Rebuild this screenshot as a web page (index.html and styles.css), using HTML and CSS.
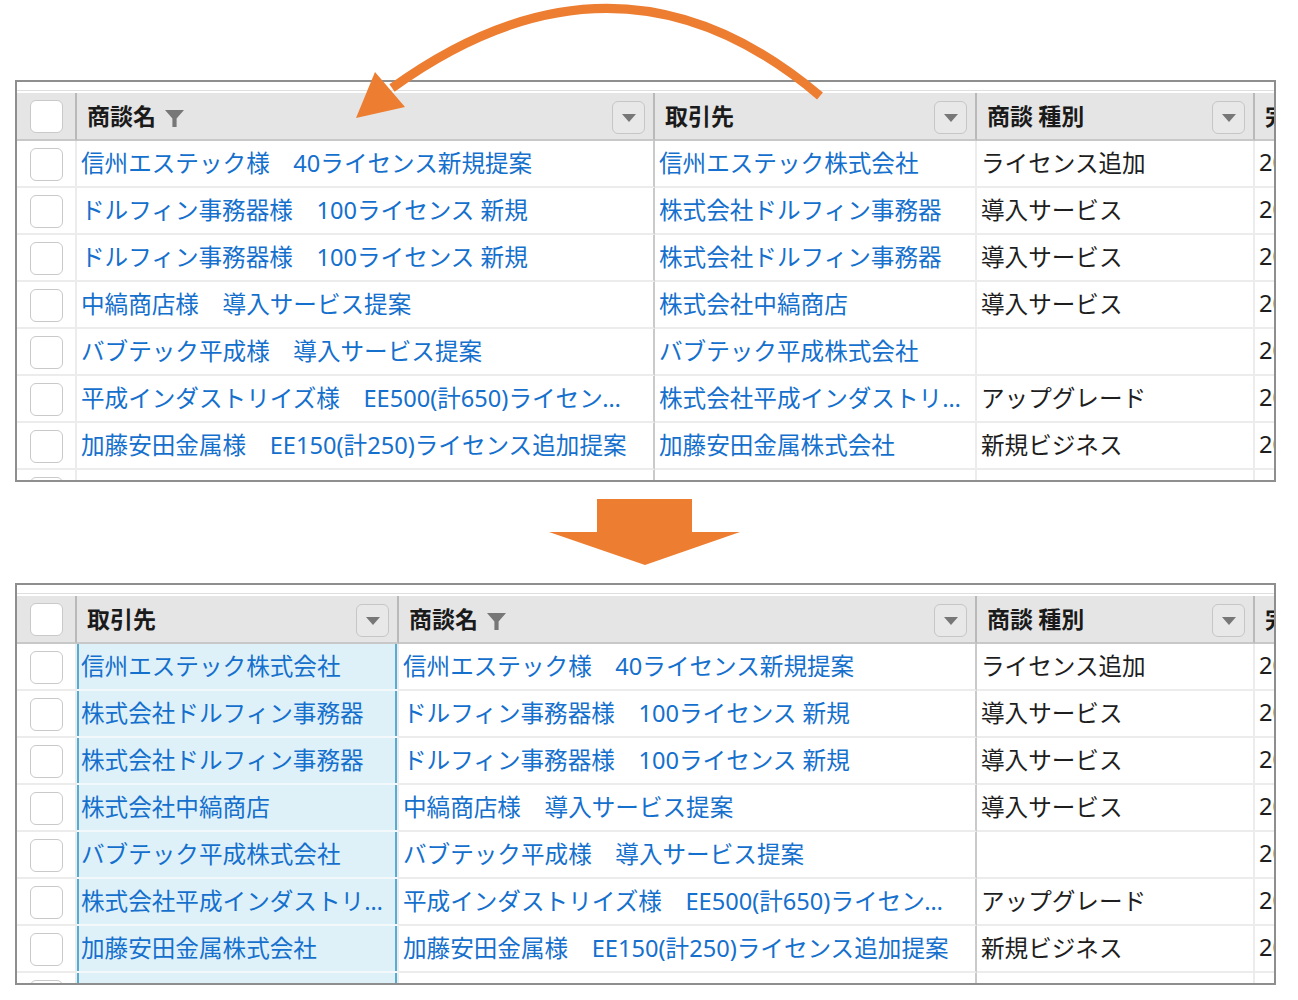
FILE: index.html
```html
<!DOCTYPE html>
<html lang="ja">
<head>
<meta charset="utf-8">
<title>列の並べ替え</title>
<link rel="stylesheet" href="styles.css">
</head>
<body>
<div class="page">
  <div class="grid">
    <div class="strip"></div>
    <div class="row head">
      <div class="cell w-chk"><span class="chk"></span></div>
      <div class="cell w-name"><span class="htxt">商談名</span><svg class="funnel" width="19" height="17" viewBox="0 0 19 17"><path d="M0 0H19L11.6 8.6V17H7.4V8.6Z" fill="#777"/></svg><span class="dd"></span></div>
      <div class="cell w-acct"><span class="htxt">取引先</span><span class="dd"></span></div>
      <div class="cell w-type"><span class="htxt">商談 種別</span><span class="dd"></span></div>
      <div class="cell w-date"><span class="htxt">完了予定日</span></div>
    </div>
    <div class="row data">
      <div class="cell w-chk"><span class="chk"></span></div>
      <div class="cell w-name"><span class="txt link">信州エステック様　40ライセンス新規提案</span></div>
      <div class="cell w-acct"><span class="txt link">信州エステック株式会社</span></div>
      <div class="cell w-type"><span class="txt">ライセンス追加</span></div>
      <div class="cell w-date"><span class="txt">2019/03/31</span></div>
    </div>
    <div class="row data">
      <div class="cell w-chk"><span class="chk"></span></div>
      <div class="cell w-name"><span class="txt link">ドルフィン事務器様　100ライセンス 新規</span></div>
      <div class="cell w-acct"><span class="txt link">株式会社ドルフィン事務器</span></div>
      <div class="cell w-type"><span class="txt">導入サービス</span></div>
      <div class="cell w-date"><span class="txt">2019/04/15</span></div>
    </div>
    <div class="row data">
      <div class="cell w-chk"><span class="chk"></span></div>
      <div class="cell w-name"><span class="txt link">ドルフィン事務器様　100ライセンス 新規</span></div>
      <div class="cell w-acct"><span class="txt link">株式会社ドルフィン事務器</span></div>
      <div class="cell w-type"><span class="txt">導入サービス</span></div>
      <div class="cell w-date"><span class="txt">2019/04/30</span></div>
    </div>
    <div class="row data">
      <div class="cell w-chk"><span class="chk"></span></div>
      <div class="cell w-name"><span class="txt link">中縞商店様　導入サービス提案</span></div>
      <div class="cell w-acct"><span class="txt link">株式会社中縞商店</span></div>
      <div class="cell w-type"><span class="txt">導入サービス</span></div>
      <div class="cell w-date"><span class="txt">2019/05/10</span></div>
    </div>
    <div class="row data">
      <div class="cell w-chk"><span class="chk"></span></div>
      <div class="cell w-name"><span class="txt link">バブテック平成様　導入サービス提案</span></div>
      <div class="cell w-acct"><span class="txt link">バブテック平成株式会社</span></div>
      <div class="cell w-type"><span class="txt"></span></div>
      <div class="cell w-date"><span class="txt">2019/05/20</span></div>
    </div>
    <div class="row data">
      <div class="cell w-chk"><span class="chk"></span></div>
      <div class="cell w-name"><span class="txt link">平成インダストリイズ様　EE500(計650)ライセンス追加提案</span></div>
      <div class="cell w-acct"><span class="txt link">株式会社平成インダストリイズ</span></div>
      <div class="cell w-type"><span class="txt">アップグレード</span></div>
      <div class="cell w-date"><span class="txt">2019/06/01</span></div>
    </div>
    <div class="row data">
      <div class="cell w-chk"><span class="chk"></span></div>
      <div class="cell w-name"><span class="txt link">加藤安田金属様　EE150(計250)ライセンス追加提案</span></div>
      <div class="cell w-acct"><span class="txt link">加藤安田金属株式会社</span></div>
      <div class="cell w-type"><span class="txt">新規ビジネス</span></div>
      <div class="cell w-date"><span class="txt">2019/06/15</span></div>
    </div>
    <div class="row data">
      <div class="cell w-chk"><span class="chk"></span></div>
      <div class="cell w-name"></div>
      <div class="cell w-acct"></div>
      <div class="cell w-type"></div>
      <div class="cell w-date"></div>
    </div>
  </div>

  <div class="between">
    <svg class="down" width="191" height="66" viewBox="0 0 191 66"><path d="M48 0H143V33H191L96 66L0 33H48Z" fill="#ed7d31"/></svg>
  </div>

  <div class="grid">
    <div class="strip"></div>
    <div class="row head">
      <div class="cell w-chk"><span class="chk"></span></div>
      <div class="cell w-acct"><span class="htxt">取引先</span><span class="dd"></span></div>
      <div class="cell w-name"><span class="htxt">商談名</span><svg class="funnel" width="19" height="17" viewBox="0 0 19 17"><path d="M0 0H19L11.6 8.6V17H7.4V8.6Z" fill="#777"/></svg><span class="dd"></span></div>
      <div class="cell w-type"><span class="htxt">商談 種別</span><span class="dd"></span></div>
      <div class="cell w-date"><span class="htxt">完了予定日</span></div>
    </div>
    <div class="row data">
      <div class="cell w-chk"><span class="chk"></span></div>
      <div class="cell w-acct sel"><span class="txt link">信州エステック株式会社</span></div>
      <div class="cell w-name"><span class="txt link">信州エステック様　40ライセンス新規提案</span></div>
      <div class="cell w-type"><span class="txt">ライセンス追加</span></div>
      <div class="cell w-date"><span class="txt">2019/03/31</span></div>
    </div>
    <div class="row data">
      <div class="cell w-chk"><span class="chk"></span></div>
      <div class="cell w-acct sel"><span class="txt link">株式会社ドルフィン事務器</span></div>
      <div class="cell w-name"><span class="txt link">ドルフィン事務器様　100ライセンス 新規</span></div>
      <div class="cell w-type"><span class="txt">導入サービス</span></div>
      <div class="cell w-date"><span class="txt">2019/04/15</span></div>
    </div>
    <div class="row data">
      <div class="cell w-chk"><span class="chk"></span></div>
      <div class="cell w-acct sel"><span class="txt link">株式会社ドルフィン事務器</span></div>
      <div class="cell w-name"><span class="txt link">ドルフィン事務器様　100ライセンス 新規</span></div>
      <div class="cell w-type"><span class="txt">導入サービス</span></div>
      <div class="cell w-date"><span class="txt">2019/04/30</span></div>
    </div>
    <div class="row data">
      <div class="cell w-chk"><span class="chk"></span></div>
      <div class="cell w-acct sel"><span class="txt link">株式会社中縞商店</span></div>
      <div class="cell w-name"><span class="txt link">中縞商店様　導入サービス提案</span></div>
      <div class="cell w-type"><span class="txt">導入サービス</span></div>
      <div class="cell w-date"><span class="txt">2019/05/10</span></div>
    </div>
    <div class="row data">
      <div class="cell w-chk"><span class="chk"></span></div>
      <div class="cell w-acct sel"><span class="txt link">バブテック平成株式会社</span></div>
      <div class="cell w-name"><span class="txt link">バブテック平成様　導入サービス提案</span></div>
      <div class="cell w-type"><span class="txt"></span></div>
      <div class="cell w-date"><span class="txt">2019/05/20</span></div>
    </div>
    <div class="row data">
      <div class="cell w-chk"><span class="chk"></span></div>
      <div class="cell w-acct sel"><span class="txt link">株式会社平成インダストリイズ</span></div>
      <div class="cell w-name"><span class="txt link">平成インダストリイズ様　EE500(計650)ライセンス追加提案</span></div>
      <div class="cell w-type"><span class="txt">アップグレード</span></div>
      <div class="cell w-date"><span class="txt">2019/06/01</span></div>
    </div>
    <div class="row data">
      <div class="cell w-chk"><span class="chk"></span></div>
      <div class="cell w-acct sel"><span class="txt link">加藤安田金属株式会社</span></div>
      <div class="cell w-name"><span class="txt link">加藤安田金属様　EE150(計250)ライセンス追加提案</span></div>
      <div class="cell w-type"><span class="txt">新規ビジネス</span></div>
      <div class="cell w-date"><span class="txt">2019/06/15</span></div>
    </div>
    <div class="row data">
      <div class="cell w-chk"><span class="chk"></span></div>
      <div class="cell w-acct sel"></div>
      <div class="cell w-name"></div>
      <div class="cell w-type"></div>
      <div class="cell w-date"></div>
    </div>
  </div>

  <svg class="curve" width="1298" height="200" viewBox="0 0 1298 200">
    <path d="M820 96Q618 -75 392 88" fill="none" stroke="#ed7d31" stroke-width="9"/>
    <path d="M356 118L375 72L405 107Z" fill="#ed7d31"/>
  </svg>
</div>
</body>
</html>
```

FILE: styles.css
```css
* { box-sizing: border-box; }
html, body { margin: 0; background: #fff; }
body { font-family: "Noto Sans CJK JP", "Noto Sans", sans-serif; }

.page {
  position: relative;
  width: 1298px;
  height: 1000px;
  padding: 80px 0 0 15px;
}

.grid {
  width: 1261px;
  height: 402px;
  border: 2px solid #8e8e8e;
  overflow: hidden;
  background: #fff;
}

.strip { height: 11px; padding-top: 8px; }
.strip::before { content: ""; display: block; height: 1px; background: #dedede; }

.row { display: flex; height: 47px; }
.row.head { height: 48px; }

.cell {
  flex: none;
  display: flex;
  align-items: center;
  min-width: 0;
  overflow: hidden;
  white-space: nowrap;
  border-right: 2px solid #ececec;
  border-bottom: 2px solid #ececec;
  padding: 0 10px 4px 4px;
  font-family: "Noto Sans", "Noto Sans CJK JP", sans-serif;
  font-size: 23.6px;
  color: #1e1e1e;
}

.w-chk { width: 60px; justify-content: center; padding: 0; }
.w-name { width: 578px; }
.w-acct { width: 322px; }
.w-type { width: 278px; }
.w-date { flex: 1 1 auto; width: auto; border-right: 0; padding-right: 0; }

.data .w-name { border-right-color: #cacaca; }

.head .cell {
  background: #e5e5e5;
  border-right-color: #b9b9b9;
  border-bottom-color: #c8c8c8;
  padding: 0 8px 0 10px;
  font-family: "Noto Sans CJK JP", "Noto Sans", sans-serif;
  font-size: 23px;
  font-weight: 700;
  color: #1a1a1a;
}
.head .w-chk { padding: 0; }
.head .w-date { border-right: 0; padding-right: 0; }

.htxt { margin-bottom: 3px; }

.txt {
  overflow: hidden;
  text-overflow: ellipsis;
  min-width: 0;
}
.w-date .txt, .w-date .htxt { overflow: visible; text-overflow: clip; flex: none; }
.link { color: #1570cd; }

.sel {
  background: #dff1f8;
  box-shadow: inset 2px 0 0 #58acd0, inset -2px 0 0 #58acd0;
  border-bottom-color: #f3f8fa;
}

.chk {
  width: 33px;
  height: 33px;
  flex: none;
  border: 1.5px solid #c9c9c9;
  border-radius: 6px;
  background: #fff;
}
.data .chk { margin-top: 1px; }

.funnel { flex: none; margin-left: 9px; margin-top: 4px; }

.dd {
  flex: none;
  margin-left: auto;
  width: 33px;
  height: 33px;
  border: 1.5px solid #c6c6c6;
  border-radius: 6px;
  background: #e8e8e8;
  display: flex;
  align-items: center;
  justify-content: center;
  margin-top: 3px;
}
.dd::before {
  content: "";
  width: 0;
  height: 0;
  border-left: 7px solid transparent;
  border-right: 7px solid transparent;
  border-top: 8px solid #777;
}

.between {
  height: 101px;
  padding: 17px 0 0 534px;
}
.down { display: block; }

.curve {
  position: absolute;
  left: 0;
  top: 0;
  pointer-events: none;
}
```
